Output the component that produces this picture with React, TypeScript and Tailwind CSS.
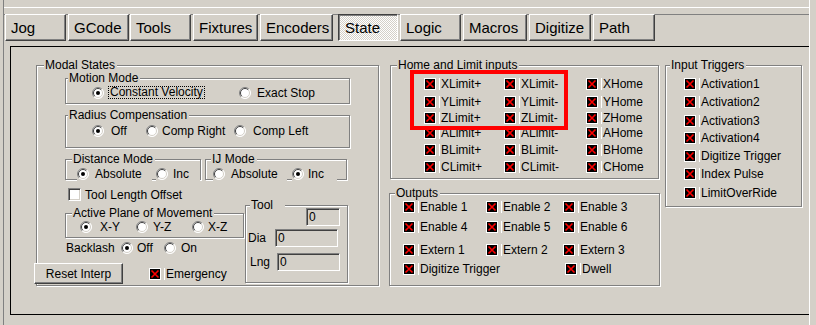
import React from 'react';

const raised = 'border border-t-white border-l-white border-r-[#404040] border-b-[#404040] shadow-[inset_-1px_-1px_0_#808080]';
const sunken = 'border border-t-[#808080] border-l-[#808080] border-r-white border-b-white shadow-[inset_1px_1px_0_#404040,inset_-1px_-1px_0_#d4d0c8]';

const tabs = [
  { label: 'Jog', cls: 'ml-[1px] w-[61px]' },
  { label: 'GCode', cls: 'ml-[2px] w-[61px]' },
  { label: 'Tools', cls: 'ml-[1px] w-[61px]' },
  { label: 'Fixtures', cls: 'ml-[2px] w-[65px]' },
  { label: 'Encoders', cls: 'ml-[2px] w-[73px]' },
  { label: 'State', cls: 'ml-[5px] w-[60px]', active: true },
  { label: 'Logic', cls: 'ml-[2px] w-[61px]' },
  { label: 'Macros', cls: 'ml-[2px] w-[64px]' },
  { label: 'Digitize', cls: 'ml-[2px] w-[62px]' },
  { label: 'Path', cls: 'ml-[2px] w-[62px]' },
];

const limitRows = [
  { mt: 'mt-[11px]', items: ['XLimit+', 'XLimit-', 'XHome'] },
  { mt: 'mt-[4px]', items: ['YLimit+', 'YLimit-', 'YHome'] },
  { mt: 'mt-[2px]', items: ['ZLimit+', 'ZLimit-', 'ZHome'] },
  { mt: 'mt-[1px]', items: ['ALimit+', 'ALimit-', 'AHome'] },
  { mt: 'mt-[3px]', items: ['BLimit+', 'BLimit-', 'BHome'] },
  { mt: 'mt-[3px]', items: ['CLimit+', 'CLimit-', 'CHome'] },
];

const outputRows = [
  { mt: 'mt-[6px]', items: ['Enable 1', 'Enable 2', 'Enable 3'] },
  { mt: 'mt-[6px]', items: ['Enable 4', 'Enable 5', 'Enable 6'] },
  { mt: 'mt-[9px]', items: ['Extern 1', 'Extern 2', 'Extern 3'] },
];

const triggers = [
  { mt: 'mt-[11px]', label: 'Activation1' },
  { mt: 'mt-[4px]', label: 'Activation2' },
  { mt: 'mt-[5px]', label: 'Activation3' },
  { mt: 'mt-[3px]', label: 'Activation4' },
  { mt: 'mt-[4px]', label: 'Digitize Trigger' },
  { mt: 'mt-[4px]', label: 'Index Pulse' },
  { mt: 'mt-[5px]', label: 'LimitOverRide' },
];

function Led() {
  return (
    <svg width="12" height="12" viewBox="0 0 12 12" className="shrink-0">
      <rect width="12" height="12" fill="#fff" shapeRendering="crispEdges" />
      <rect x="1" y="1" width="10" height="10" fill="#000" shapeRendering="crispEdges" />
      <path d="M2.5 2.5L9.5 9.5M9.5 2.5L2.5 9.5" stroke="#ff0000" strokeWidth="1.6" />
    </svg>
  );
}

function Indicator({ label, className = '' }: { label: string; className?: string }) {
  return (
    <div className={`flex items-center h-[14px] shrink-0 ${className}`}>
      <Led />
      <span className="ml-[3px] w-px h-[12px] bg-white" />
      <span className="ml-[1px] whitespace-nowrap">{label}</span>
    </div>
  );
}

function Radio({ on }: { on?: boolean }) {
  return (
    <svg width="12" height="12" viewBox="0 0 12 12" className="shrink-0">
      <circle cx="6" cy="6" r="5.5" fill="#fff" />
      <path d="M2.1 9.9A5.5 5.5 0 0 1 9.9 2.1" fill="none" stroke="#808080" />
      <path d="M9.9 2.1A5.5 5.5 0 0 1 2.1 9.9" fill="none" stroke="#fff" />
      <path d="M2.8 9.2A4.5 4.5 0 0 1 9.2 2.8" fill="none" stroke="#404040" />
      <path d="M9.2 2.8A4.5 4.5 0 0 1 2.8 9.2" fill="none" stroke="#d4d0c8" />
      {on && <circle cx="6" cy="6" r="2" fill="#000" />}
    </svg>
  );
}

function Opt({ label, on, className = '', gap = 'ml-[5px]' }: { label: string; on?: boolean; className?: string; gap?: string }) {
  return (
    <div className={`flex items-center shrink-0 ${className}`}>
      <Radio on={on} />
      <span className={`${gap} whitespace-nowrap`}>{label}</span>
    </div>
  );
}

function GroupBox({ title, titleClass, className = '', children }: { title: string; titleClass: string; className?: string; children?: React.ReactNode }) {
  return (
    <div className={`relative shrink-0 border border-[#808080] shadow-[inset_1px_1px_0_#fff,1px_1px_0_#fff] ${className}`}>
      <span className={`absolute -top-[8px] bg-[#d4d0c8] pl-[1px] pr-[2px] leading-[14px] whitespace-nowrap ${titleClass}`}>{title}</span>
      {children}
    </div>
  );
}

function Field({ className = '' }: { className?: string }) {
  return (
    <div className={`h-[18px] shrink-0 flex items-center pl-[2px] bg-[#d4d0c8] ${sunken} ${className}`}>0</div>
  );
}

export default function App() {
  return (
    <div className="w-[816px] h-[325px] overflow-hidden bg-[#d4d0c8] pl-[3px] text-[12px] leading-[14px] text-black font-['Liberation_Sans',Arial,sans-serif]">
      <div className="w-[807px] h-full border-x border-l-[#808080] border-r-white">
        <div className="h-[8px] border-b border-b-white" />

        {/* tab strip */}
        <div className="mt-[6px] h-[27px] flex shadow-[inset_0_1px_0_#808080]">
          {tabs.map(t => (
            <div key={t.label}
              className={`${t.cls} h-[27px] flex items-center text-[15px] ${t.active
                ? 'pl-[6px] pt-[1px] border border-t-[#404040] border-l-[#404040] border-r-white border-b-white shadow-[inset_1px_1px_0_#808080] bg-[repeating-conic-gradient(#fff_0%_25%,#d4d0c8_0%_50%)] bg-size-[2px_2px]'
                : `pl-[5px] ${raised}`}`}>
              {t.label}
            </div>
          ))}
        </div>

        {/* page */}
        <div className="mt-[5px] ml-[6px] w-[799px] h-[269px] border-t border-l border-b border-black flex items-start">

          <GroupBox title="Modal States" titleClass="left-[7px]" className="ml-[25px] mt-[18px] w-[343px] h-[221px]">
            <div className="flex flex-col">
              <GroupBox title="Motion Mode" titleClass="left-[2px]" className="ml-[28px] mt-[12px] w-[285px] h-[26px]">
                <div className="mt-[7px] h-[13px] flex items-center">
                  <div className="ml-[26px] w-[147px] flex items-center">
                    <Radio on />
                    <span className="ml-[4px] px-[1px] border border-dotted border-black leading-[11px] whitespace-nowrap">Constant Velocity</span>
                  </div>
                  <Opt label="Exact Stop" gap="ml-[6px]" />
                </div>
              </GroupBox>

              <GroupBox title="Radius Compensation" titleClass="left-[2px]" className="ml-[28px] mt-[11px] w-[285px] h-[33px]">
                <div className="mt-[9px] h-[12px] flex items-center">
                  <Opt label="Off" on className="ml-[26px] w-[54px]" gap="ml-[7px]" />
                  <Opt label="Comp Right" className="w-[88px]" gap="ml-[4px]" />
                  <Opt label="Comp Left" gap="ml-[7px]" />
                </div>
              </GroupBox>

              <div className="mt-[11px] flex">
                <GroupBox title="Distance Mode" titleClass="left-[6px]" className="ml-[28px] w-[136px] h-[21px]">
                  <div className="mt-[6px] flex">
                    <Opt label="Absolute" on className="ml-[11px] w-[75px] h-[15px] bg-[#d4d0c8]" gap="ml-[6px]" />
                    <Opt label="Inc" className="ml-[4px] w-[44px] h-[15px] bg-[#d4d0c8]" />
                  </div>
                </GroupBox>
                <GroupBox title="IJ Mode" titleClass="left-[5px]" className="ml-[4px] w-[142px] h-[21px]">
                  <div className="mt-[6px] flex">
                    <Opt label="Absolute" className="ml-[7px] w-[74px] h-[15px] bg-[#d4d0c8]" gap="ml-[6px]" />
                    <Opt label="Inc" on className="ml-[5px] w-[45px] h-[15px] bg-[#d4d0c8]" gap="ml-[4px]" />
                  </div>
                </GroupBox>
              </div>

              <div className="mt-[8px] ml-[31px] h-[13px] flex items-center">
                <div className={`w-[13px] h-[13px] bg-white ${sunken}`} />
                <span className="ml-[4px] whitespace-nowrap">Tool Length Offset</span>
              </div>

              <div className="flex">
                <div className="w-[208px] flex flex-col">
                  <GroupBox title="Active Plane of Movement" titleClass="left-[6px]" className="ml-[28px] mt-[12px] w-[179px] h-[25px]">
                    <div className="mt-[7px] h-[12px] flex items-center">
                      <Opt label="X-Y" on className="ml-[14px] w-[56px]" gap="ml-[8px]" />
                      <Opt label="Y-Z" className="w-[56px]" />
                      <Opt label="X-Z" gap="ml-[4px]" />
                    </div>
                  </GroupBox>
                  <div className="mt-[4px] h-[12px] flex items-center">
                    <span className="ml-[29px] w-[55px] whitespace-nowrap">Backlash</span>
                    <Opt label="Off" on className="w-[43px]" gap="ml-[4px]" />
                    <Opt label="On" />
                  </div>
                  <div className="mt-[9px] h-[21px] flex items-center">
                    <button className={`-ml-[3px] w-[89px] h-[21px] shrink-0 flex items-center justify-center bg-[#d4d0c8] ${raised}`}>Reset Interp</button>
                    <Indicator label="Emergency" className="ml-[26px]" />
                  </div>
                </div>

                <GroupBox title="Tool" titleClass="left-[4px] pr-[12px]" className="mt-[4px] w-[103px] h-[78px]">
                  <Field className="ml-[60px] mt-[2px] w-[34px]" />
                  <div className="mt-[3px] flex items-center">
                    <span className="ml-[2px] w-[27px]">Dia</span>
                    <Field className="w-[63px]" />
                  </div>
                  <div className="mt-[6px] flex items-center">
                    <span className="ml-[4px] w-[27px]">Lng</span>
                    <Field className="w-[63px]" />
                  </div>
                </GroupBox>
              </div>
            </div>
          </GroupBox>

          <div className="ml-[10px] w-[271px] shrink-0 flex flex-col">
            <GroupBox title="Home and Limit inputs" titleClass="left-[6px]" className="ml-[1px] mt-[18px] w-[269px] h-[114px]">
              {limitRows.map(r => (
                <div key={r.items[0]} className={`${r.mt} ml-[33px] flex`}>
                  <Indicator label={r.items[0]} className="w-[80px]" />
                  <Indicator label={r.items[1]} className="w-[82px]" />
                  <Indicator label={r.items[2]} />
                </div>
              ))}
              <div className="absolute left-[19px] top-[4px] w-[158px] h-[60px] border-[4px] border-[#ff0000]" />
            </GroupBox>

            <GroupBox title="Outputs" titleClass="left-[5px]" className="mt-[14px] w-[271px] h-[93px]">
              {outputRows.map(r => (
                <div key={r.items[0]} className={`${r.mt} ml-[13px] flex`}>
                  <Indicator label={r.items[0]} className="w-[83px]" />
                  <Indicator label={r.items[1]} className="w-[77px]" />
                  <Indicator label={r.items[2]} />
                </div>
              ))}
              <div className="mt-[5px] ml-[13px] flex">
                <Indicator label="Digitize Trigger" className="w-[162px]" />
                <Indicator label="Dwell" />
              </div>
            </GroupBox>
          </div>

          <GroupBox title="Input Triggers" titleClass="left-[4px]" className="ml-[5px] mt-[18px] w-[137px] h-[142px]">
            {triggers.map(t => (
              <Indicator key={t.label} label={t.label} className={`${t.mt} ml-[18px]`} />
            ))}
          </GroupBox>
        </div>
      </div>
    </div>
  );
}
